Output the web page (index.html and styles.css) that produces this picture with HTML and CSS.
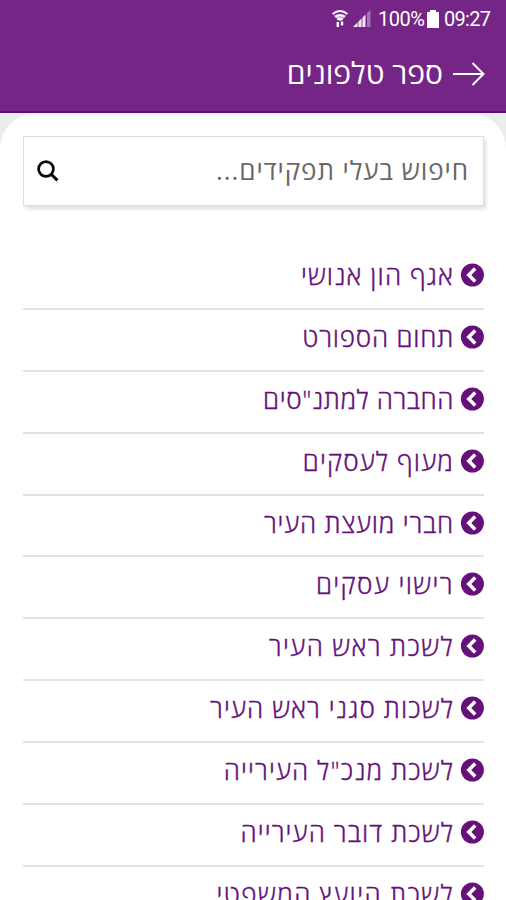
FILE: index.html
```html
<!DOCTYPE html>
<html lang="he" dir="rtl">
<head>
<meta charset="utf-8">
<title>ספר טלפונים</title>
<link rel="stylesheet" href="styles.css">
</head>
<body>
<svg class="defs" width="0" height="0" aria-hidden="true">
  <symbol id="chevron" viewBox="0 0 24 24">
    <circle cx="12.4" cy="12" r="11.5" fill="#651179"/>
    <path d="M15.2 5.6 8.8 12l6.4 6.4" fill="none" stroke="#fff" stroke-width="3.5"/>
  </symbol>
</svg>
<header class="header">
  <div class="status" dir="ltr">
    <svg class="wifi" width="16" height="18" viewBox="0 0 16 18" fill="none" stroke="#fff">
      <path d="M.5 4Q8-2 15.5 4" stroke-width="1.8"/>
      <path d="M2 5.5Q8 2 14 5.5L9 11H7z" fill="#fff" fill-opacity=".65" stroke="none"/>
      <path d="M3 7Q8 3.5 13 7M5.2 9.7Q8 7.8 10.8 9.7" stroke-width="1.4"/>
      <path d="M5.8 12v5M10 11.5v4" stroke-width="2.4"/>
    </svg>
    <svg class="signal" width="18" height="18" viewBox="0 0 18 18">
      <path d="M0 17 12.5 4.5V17z" fill="#fff" opacity=".9"/>
      <path d="M5 11v6M9 7v10" stroke="#742585" stroke-width=".8"/>
      <path d="M14 3 17.5 0v17H14z" fill="#a873b4"/>
    </svg>
    <span class="percent">100%</span>
    <svg class="battery" width="12" height="18" viewBox="0 0 12 18"><path d="M3 0h6v2h3v16H0V2h3z" fill="#fff"/></svg>
    <span class="time">09:27</span>
  </div>
  <div class="title-row">
    <svg class="arrow" width="32" height="24" viewBox="0 0 32 24" fill="none" stroke="#fff" stroke-width="2"><path d="M0 12h30M19.5 1 30.5 12l-11 11"/></svg>
    <h1 class="title">ספר טלפונים</h1>
  </div>
</header>
<main class="main">
  <div class="sheet">
    <div class="search">
      <span class="placeholder">חיפוש בעלי תפקידים...</span>
      <svg width="22" height="22" viewBox="0 0 22 22" fill="none" stroke="#080808"><circle cx="9" cy="9" r="7.4" stroke-width="2.7"/><path d="m14.2 14.2 6.2 6.2" stroke-width="3"/></svg>
    </div>
    <ul class="list">
      <li class="item"><svg class="chev"><use href="#chevron"/></svg><span class="label">אגף הון אנושי</span></li>
      <li class="item snug"><svg class="chev"><use href="#chevron"/></svg><span class="label">תחום הספורט</span></li>
      <li class="item tight"><svg class="chev"><use href="#chevron"/></svg><span class="label">החברה למתנ"סים</span></li>
      <li class="item"><svg class="chev"><use href="#chevron"/></svg><span class="label">מעוף לעסקים</span></li>
      <li class="item snug"><svg class="chev"><use href="#chevron"/></svg><span class="label">חברי מועצת העיר</span></li>
      <li class="item loose"><svg class="chev"><use href="#chevron"/></svg><span class="label">רישוי עסקים</span></li>
      <li class="item loose"><svg class="chev"><use href="#chevron"/></svg><span class="label">לשכת ראש העיר</span></li>
      <li class="item"><svg class="chev"><use href="#chevron"/></svg><span class="label">לשכות סגני ראש העיר</span></li>
      <li class="item"><svg class="chev"><use href="#chevron"/></svg><span class="label">לשכת מנכ"ל העירייה</span></li>
      <li class="item"><svg class="chev"><use href="#chevron"/></svg><span class="label">לשכת דובר העירייה</span></li>
      <li class="item loose"><svg class="chev"><use href="#chevron"/></svg><span class="label">לשכת היועץ המשפטי</span></li>
    </ul>
  </div>
</main>
</body>
</html>
```
FILE: styles.css
```css
* { box-sizing: border-box; }
body {
  margin: 0;
  height: 900px;
  overflow: hidden;
  background: #fff;
  font-family: "Open Sans", "Noto Sans", sans-serif;
}
.defs { display: block; }
.header {
  height: 113px;
  background: #742585;
  border-bottom: 2px solid #5c0f70;
  color: #fff;
}
.status {
  display: flex;
  justify-content: flex-end;
  align-items: center;
  height: 38px;
  padding-right: 15px;
  font: 400 20px/38px Roboto, sans-serif;
}
.wifi { margin-top: -1px; }
.signal { margin-left: 5px; }
.percent { margin-left: 7px; width: 45px; letter-spacing: -0.5px; }
.battery { margin-left: 4px; }
.time { margin-left: 5px; width: 47px; letter-spacing: -0.7px; }
.title-row {
  display: flex;
  align-items: center;
  height: 72px;
  padding-right: 21px;
}
.title {
  margin: -3px 10px 0 0;
  font-size: 30px;
  line-height: 40px;
  font-weight: 400;
  white-space: nowrap;
}
.main {
  height: 787px;
  background: #e9eeed;
}
.sheet {
  height: 100%;
  padding: 23px 22px 0 23px;
  overflow: hidden;
  background: linear-gradient(#f4f4f4, #fff 8px);
  border-radius: 36px 36px 0 0;
}
.search {
  display: flex;
  justify-content: space-between;
  align-items: center;
  height: 70px;
  padding: 0 14px 0 13px;
  background: #fff;
  border: 1px solid #dedede;
  box-shadow: 2px 3px 4px rgba(0, 0, 0, .13);
  color: #686868;
}
.placeholder {
  margin-top: -3px;
  font-size: 26px;
  line-height: 36px;
  letter-spacing: 0.9px;
  white-space: nowrap;
}
.list {
  margin: 0;
  padding: 42px 0 0;
  list-style: none;
}
.item {
  display: flex;
  align-items: center;
  height: 61.9px;
  padding-bottom: 6px;
  border-bottom: 2px solid #e3e3e3;
  color: #651179;
  letter-spacing: 1.13px;
}
.snug { letter-spacing: 0.8px; }
.tight { letter-spacing: 0.6px; }
.loose { letter-spacing: 1.4px; }
.chev { flex: none; width: 24px; height: 24px; }
.label {
  margin-right: 6px;
  font-size: 26px;
  font-weight: 300;
  line-height: 36px;
  white-space: nowrap;
  -webkit-text-stroke: 0.3px currentColor;
}
```
